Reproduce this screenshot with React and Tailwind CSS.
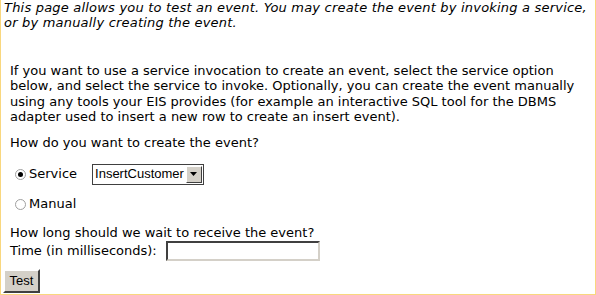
export default function App() {
  return (
    <div className="w-[596px] h-[295px] overflow-hidden bg-white">
      <div className="h-[295px] w-[596px] border-l border-r border-b border-[#f9d77e] flex flex-col text-[13px] text-black font-['DejaVu_Sans',Verdana,sans-serif]">
        <p className="italic leading-[15px] pl-[3px] pr-1 tracking-[0.2px]">
          This page allows you to test an event. You may create the event by invoking a service, or by manually creating the event.
        </p>
        <div className="pl-[9px] pr-2 mt-[33px]">
          <p className="leading-[15.3px]">
            If you want to use a service invocation to create an event, select the service option below, and select the service to invoke. Optionally, you can create the event manually using any tools your EIS provides (for example an interactive SQL tool for the DBMS adapter used to insert a new row to create an insert event).
          </p>
          <p className="mt-[11px] leading-[16px]">How do you want to create the event?</p>
          <div className="flex items-center mt-[12px] h-[22px]">
            <span className="w-[11px] h-[11px] rounded-full border border-[#a0a0a0] bg-white flex items-center justify-center ml-[5px]">
              <span className="w-[5px] h-[5px] rounded-full bg-black" />
            </span>
            <span className="ml-[3px]">Service</span>
            <div className="ml-[15px] flex items-center h-[21px] border border-[#404040] bg-white">
              <span className="pl-[2px] pr-[2px] text-[13px] font-['Liberation_Sans',Arial,sans-serif]">InsertCustomer</span>
              <span className="w-[16px] h-[17px] mr-[1px] bg-[#d4d0c8] border border-t-white border-l-white border-r-[#404040] border-b-[#404040] flex items-center justify-center">
                <svg width="7" height="4" viewBox="0 0 7 4"><path d="M0 0h7L3.5 4z" fill="#000" /></svg>
              </span>
            </div>
          </div>
          <div className="flex items-center mt-[8px] h-[22px]">
            <span className="w-[11px] h-[11px] rounded-full border border-[#a0a0a0] bg-white ml-[5px]" />
            <span className="ml-[3px]">Manual</span>
          </div>
          <p className="mt-[10px] leading-[16px]">How long should we wait to receive the event?</p>
          <div className="flex items-center h-[20px]">
            <span>Time (in milliseconds):</span>
            <span className="ml-[9px] w-[154px] h-[20px] border-2 border-t-[#404040] border-l-[#404040] border-r-[#d4d0c8] border-b-[#d4d0c8] bg-white" />
          </div>
        </div>
        <div className="pl-[2px] mt-[8px]">
          <button className="h-[24px] w-[37px] bg-[#d4d0c8] border-2 border-t-white border-l-white border-r-[#404040] border-b-[#404040] text-[13px] font-['Liberation_Sans',Arial,sans-serif]">
            Test
          </button>
        </div>
      </div>
    </div>
  );
}
